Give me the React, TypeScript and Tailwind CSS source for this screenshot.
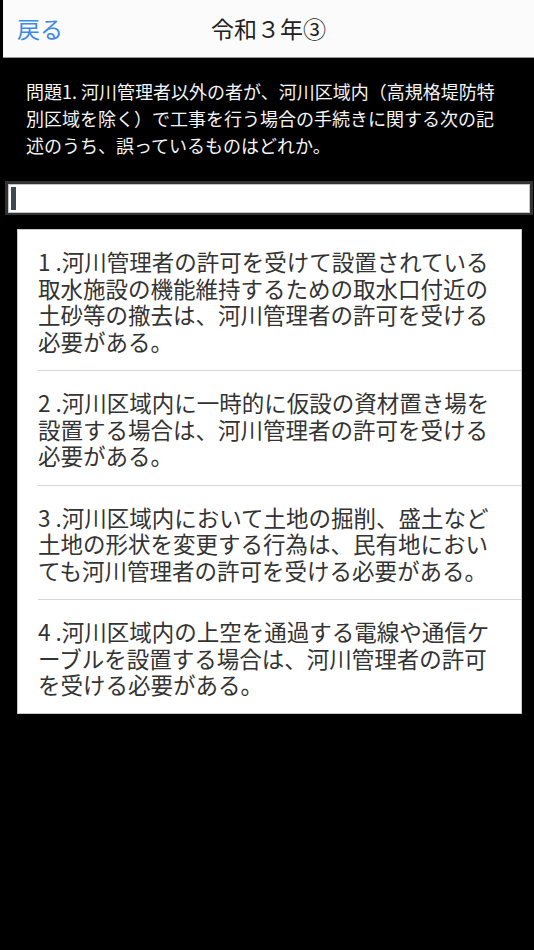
import React from 'react';

const font = { fontFamily: '"Noto Sans CJK JP", "Noto Sans", sans-serif' };

const choices: string[][] = [
  [
    '1 .河川管理者の許可を受けて設置されている',
    '取水施設の機能維持するための取水口付近の',
    '土砂等の撤去は、河川管理者の許可を受ける',
    '必要がある。',
  ],
  [
    '2 .河川区域内に一時的に仮設の資材置き場を',
    '設置する場合は、河川管理者の許可を受ける',
    '必要がある。',
  ],
  [
    '3 .河川区域内において土地の掘削、盛土など',
    '土地の形状を変更する行為は、民有地におい',
    'ても河川管理者の許可を受ける必要がある。',
  ],
  [
    '4 .河川区域内の上空を通過する電線や通信ケ',
    'ーブルを設置する場合は、河川管理者の許可',
    'を受ける必要がある。',
  ],
];

function Lines({ lines }: { lines: string[] }) {
  return (
    <>
      {lines.map((l, i) => (
        <React.Fragment key={i}>
          {l}
          {i < lines.length - 1 && <br />}
        </React.Fragment>
      ))}
    </>
  );
}

export default function App() {
  return (
    <div className="min-h-[950px] w-[534px] bg-black" style={font}>
      {/* header */}
      <div className="ml-[3px] h-[58px] bg-[#fbfbfb] border-b border-[#9a9a9a] flex items-center relative">
        <span className="pl-[14px] text-[23px] text-[#3b8ae6] leading-none">戻る</span>
        <span className="absolute left-0 right-0 text-center text-[23px] text-[#222] leading-none pointer-events-none">
          令和３年③
        </span>
      </div>

      {/* question */}
      <div className="pt-[20px] pl-[26px] pr-[28px] text-[18px] leading-[27px] text-[#f5f5f5]">
        <Lines
          lines={[
            '問題1. 河川管理者以外の者が、河川区域内（高規格堤防特',
            '別区域を除く）で工事を行う場合の手続きに関する次の記',
            '述のうち、誤っているものはどれか。',
          ]}
        />
      </div>

      {/* answer input */}
      <div className="mt-[22px] ml-[5px] mr-[1px] border-[3px] border-[#333] border-b-[2px]">
        <div className="h-[29px] bg-white border border-[#c4c4c4] flex items-center pl-[2px]">
          <div className="w-[5px] h-[23px] bg-[#3e4a50]" />
        </div>
      </div>

      {/* choices */}
      <div className="mt-[14px] ml-[17px] mr-[12px] bg-white border border-[#c8c8c8]">
        {choices.map((c, i) => {
          const last = i === choices.length - 1;
          return (
            <div
              key={i}
              className={
                'ml-[20px] pr-[20px] pt-[18px] text-[22.5px] leading-[26.5px] text-[#333] ' +
                (last ? 'pb-[15px]' : 'pb-[16px] border-b border-[#d6d6d6]')
              }
            >
              <Lines lines={c} />
            </div>
          );
        })}
      </div>
    </div>
  );
}
